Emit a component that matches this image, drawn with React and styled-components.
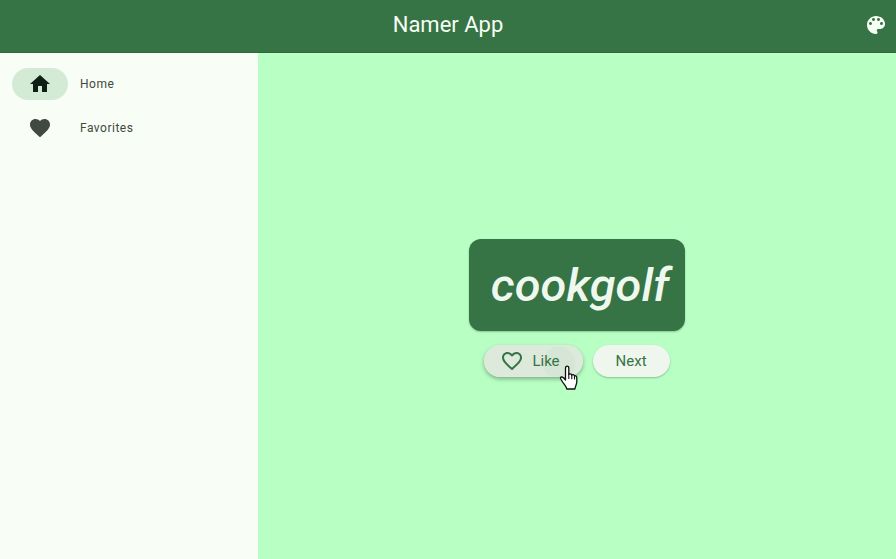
import React from "react";
import styled, { createGlobalStyle } from "styled-components";

const GlobalStyle = createGlobalStyle`
  *, *::before, *::after { box-sizing: border-box; }
  html, body, #root { height: 100%; }
  body {
    margin: 0;
    font-family: Roboto, "Liberation Sans", sans-serif;
    color: #414941;
  }
`;

const Shell = styled.div`
  display: flex;
  flex-direction: column;
  min-height: 100%;
`;

const TopBar = styled.header`
  display: grid;
  grid-template-columns: 1fr auto 1fr;
  align-items: center;
  height: 53px;
  padding: 0 8px 2px;
  background: #367345;
  border-bottom: 1px solid #306640;
  color: #f6fff4;
`;

const Title = styled.h1`
  grid-column: 2;
  margin: 0;
  font-size: 22px;
  font-weight: 400;
  line-height: 28px;
`;

const IconButton = styled.button`
  justify-self: end;
  display: flex;
  padding: 0;
  border: 0;
  background: none;
  color: inherit;
  cursor: pointer;
`;

const Body = styled.div`
  display: flex;
  flex: 1;
`;

const Rail = styled.nav`
  display: flex;
  flex-direction: column;
  gap: 12px;
  flex: 0 0 258px;
  padding: 15px 12px;
  background: #f8fdf6;
`;

const RailLink = styled.a`
  display: flex;
  align-items: center;
  gap: 12px;
  color: #414941;
  font-size: 12px;
  letter-spacing: 0.5px;
  line-height: 16px;
  text-decoration: none;
`;

const Indicator = styled.span`
  display: flex;
  align-items: center;
  justify-content: center;
  width: 56px;
  height: 32px;
  border-radius: 16px;
  background: ${(p) => (p.$selected ? "#d3ebd4" : "transparent")};
  color: ${(p) => (p.$selected ? "#0e2013" : "#414941")};
`;

const Stage = styled.main`
  display: flex;
  flex: 1;
  flex-direction: column;
  align-items: center;
  justify-content: center;
  gap: 14px;
  padding-top: 4px;
  background: #b8ffc4;
`;

const WordCard = styled.div`
  padding: 20px 16px 20px 22px;
  border-radius: 12px;
  background: #367345;
  box-shadow: 0 1px 2px rgba(0, 0, 0, 0.25);
  color: #eef8ee;
  font-size: 47px;
  font-style: italic;
  font-weight: 500;
  line-height: 52px;
`;

const Actions = styled.div`
  display: flex;
  gap: 10px;
`;

const PillButton = styled.button`
  position: relative;
  display: flex;
  align-items: center;
  gap: 8px;
  height: 32px;
  padding: ${(p) => (p.$withIcon ? "0 23px 0 16px" : "0 23px")};
  border: 0;
  border-radius: 16px;
  background: ${(p) =>
    p.$hovered
      ? "radial-gradient(circle at 75px 18px, #d5e5d6 0 15px, #dce9db 17px)"
      : "#eff6ee"};
  box-shadow: ${(p) =>
    p.$hovered
      ? "0 2px 4px rgba(0, 0, 0, 0.32)"
      : "0 1px 2px rgba(0, 0, 0, 0.25)"};
  color: #367345;
  font-family: inherit;
  font-size: 15px;
  line-height: 20px;
  cursor: pointer;
`;

const Pointer = styled.svg`
  position: absolute;
  top: 20px;
  left: 75px;
  pointer-events: none;
`;

const Icon = ({ path, size = 24 }) => (
  <svg width={size} height={size} viewBox="0 0 24 24" fill="currentColor" aria-hidden="true">
    <path d={path} />
  </svg>
);

const icons = {
  home: "M10 20v-6h4v6h5v-8h3L12 3 2 12h3v8z",
  favorite:
    "M12 21.35l-1.45-1.32C5.4 15.36 2 12.28 2 8.5 2 5.42 4.42 3 7.5 3c1.74 0 3.41.81 4.5 2.09C13.09 3.81 14.76 3 16.5 3 19.58 3 22 5.42 22 8.5c0 3.78-3.4 6.86-8.55 11.54L12 21.35z",
  favoriteBorder:
    "M16.5 3c-1.74 0-3.41.81-4.5 2.09C10.91 3.81 9.24 3 7.5 3 4.42 3 2 5.42 2 8.5c0 3.78 3.4 6.86 8.55 11.54L12 21.35l1.45-1.32C18.6 15.36 22 12.28 22 8.5 22 5.42 19.58 3 16.5 3zm-4.4 15.55l-.1.1-.1-.1C7.14 14.24 4 11.39 4 8.5 4 6.5 5.5 5 7.5 5c1.54 0 3.04.99 3.57 2.36h1.87C13.46 5.99 14.96 5 16.5 5c2 0 3.5 1.5 3.5 3.5 0 2.89-3.14 5.74-7.9 10.05z",
  palette:
    "M12 3c-4.97 0-9 4.03-9 9s4.03 9 9 9c.83 0 1.5-.67 1.5-1.5 0-.39-.15-.74-.39-1.01-.23-.26-.38-.61-.38-.99 0-.83.67-1.5 1.5-1.5H16c2.76 0 5-2.24 5-5 0-4.42-4.03-8-9-8zm-5.5 9c-.83 0-1.5-.67-1.5-1.5S5.67 9 6.5 9 8 9.67 8 10.5 7.33 12 6.5 12zm3-4C8.67 8 8 7.33 8 6.5S8.67 5 9.5 5s1.5.67 1.5 1.5S10.33 8 9.5 8zm5 0c-.83 0-1.5-.67-1.5-1.5S13.67 5 14.5 5s1.5.67 1.5 1.5S15.33 8 14.5 8zm3 4c-.83 0-1.5-.67-1.5-1.5S16.67 9 17.5 9s1.5.67 1.5 1.5-.67 1.5-1.5 1.5z",
};

const destinations = [
  { label: "Home", icon: icons.home, selected: true },
  { label: "Favorites", icon: icons.favorite, selected: false },
];

export default function App() {
  return (
    <>
      <GlobalStyle />
      <Shell>
        <TopBar>
          <Title>Namer App</Title>
          <IconButton type="button" aria-label="Change color">
            <Icon path={icons.palette} />
          </IconButton>
        </TopBar>
        <Body>
          <Rail aria-label="Main">
            {destinations.map((d) => (
              <RailLink
                key={d.label}
                href={`#${d.label.toLowerCase()}`}
                aria-current={d.selected ? "page" : undefined}
              >
                <Indicator $selected={d.selected}>
                  <Icon path={d.icon} />
                </Indicator>
                {d.label}
              </RailLink>
            ))}
          </Rail>
          <Stage>
            <WordCard>cookgolf</WordCard>
            <Actions>
              <PillButton type="button" $withIcon $hovered>
                <Icon path={icons.favoriteBorder} />
                Like
                <Pointer width="20" height="26" viewBox="0 0 20 26" aria-hidden="true">
                  <path
                    d="M6.5 3.2C6.5 1.9 7.2 1.2 8.1 1.2s1.7.7 1.7 2v6.3c.3-.9 2.7-.9 3 .6.6-.8 2.5-.6 2.7.9.9-.6 2.3 0 2.3 1.6v4.2c0 2.9-1.6 4-1.9 7.2H7.8c-.3-2.5-3.3-5.1-5-8.2-.7-1.3-1.6-2.1-1.3-3 .5-1.3 2.200-.9 3.200.2l1.800 2z"
                    fill="#fff"
                    stroke="#111"
                    strokeWidth="1.3"
                    strokeLinejoin="round"
                  />
                  <path d="M9.8 9v4.5M12.8 10v3.8M15.5 11v3" fill="none" stroke="#111" strokeWidth="1.1" strokeLinecap="round" />
                </Pointer>
              </PillButton>
              <PillButton type="button">Next</PillButton>
            </Actions>
          </Stage>
        </Body>
      </Shell>
    </>
  );
}
